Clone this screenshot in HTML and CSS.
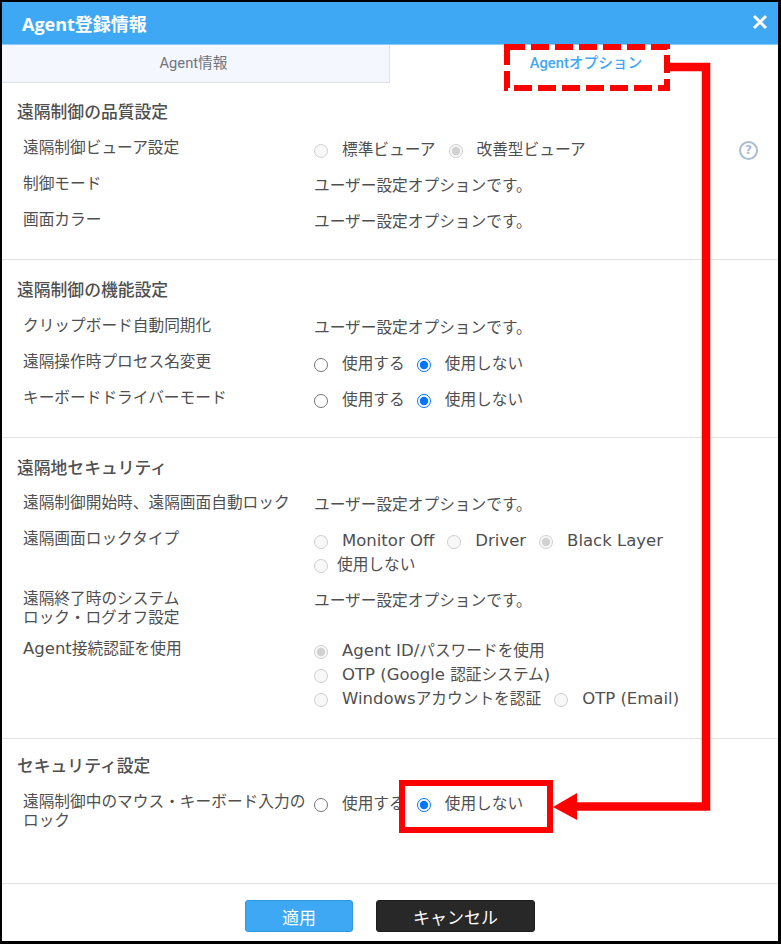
FILE: index.html
```html
<!DOCTYPE html>
<html lang="ja">
<head>
  <meta charset="UTF-8" />
  <title>Agent登録情報</title>
  <link rel="stylesheet" href="styles.css">
</head>
<body>
  <div class="dialog">
    <div class="header">
      <div class="header-title">Agent登録情報</div>
      <svg class="close" width="16" height="16" viewBox="0 0 16 16"><path d="M2 2L14 14M14 2L2 14" stroke="#fff" stroke-width="3"/></svg>
    </div>

    <div class="tabs">
      <div class="tab">Agent情報</div>
      <div class="tab active">Agentオプション</div>
    </div>

    <div class="content">
      <!-- 品質 -->
      <div class="section first">
        <div class="section-title">遠隔制御の品質設定</div>
        <div class="row">
          <div class="label">遠隔制御ビューア設定</div>
          <div class="value wide">
            <label class="opt"><input type="radio" disabled> 標準ビューア</label>
            <label class="opt"><input type="radio" disabled checked> 改善型ビューア</label>
          </div>
          <div class="help">?</div>
        </div>
        <div class="row">
          <div class="label">制御モード</div>
          <div class="value plain">ユーザー設定オプションです。</div>
        </div>
        <div class="row">
          <div class="label">画面カラー</div>
          <div class="value plain">ユーザー設定オプションです。</div>
        </div>
      </div>

      <!-- 機能 -->
      <div class="section">
        <div class="section-title">遠隔制御の機能設定</div>
        <div class="row">
          <div class="label">クリップボード自動同期化</div>
          <div class="value plain">ユーザー設定オプションです。</div>
        </div>
        <div class="row">
          <div class="label">遠隔操作時プロセス名変更</div>
          <div class="value">
            <label class="opt"><input type="radio" class="live"> 使用する</label>
            <label class="opt"><input type="radio" class="live" checked> 使用しない</label>
          </div>
        </div>
        <div class="row">
          <div class="label">キーボードドライバーモード</div>
          <div class="value">
            <label class="opt"><input type="radio" class="live"> 使用する</label>
            <label class="opt"><input type="radio" class="live" checked> 使用しない</label>
          </div>
        </div>
      </div>

      <!-- セキュリティ -->
      <div class="section remote">
        <div class="section-title">遠隔地セキュリティ</div>
        <div class="row">
          <div class="label">遠隔制御開始時、遠隔画面自動ロック</div>
          <div class="value plain">ユーザー設定オプションです。</div>
        </div>
        <div class="row lock-type">
          <div class="label">遠隔画面ロックタイプ</div>
          <div class="value wide">
            <label class="opt"><input type="radio" disabled> <span class="en">Monitor Off</span></label>
            <label class="opt"><input type="radio" disabled> <span class="en">Driver</span></label>
            <label class="opt"><input type="radio" disabled checked> <span class="en">Black Layer</span></label>
            <label class="opt tight"><input type="radio" disabled> 使用しない</label>
          </div>
        </div>
        <div class="row">
          <div class="label two-line">遠隔終了時のシステム<br>ロック・ログオフ設定</div>
          <div class="value plain">ユーザー設定オプションです。</div>
        </div>
        <div class="row">
          <div class="label"><span class="en">Agent</span>接続認証を使用</div>
          <div class="value wide">
            <label class="opt line"><input type="radio" disabled checked> <span><span class="en">Agent ID/</span>パスワードを使用</span></label>
            <label class="opt line"><input type="radio" disabled> <span><span class="en">OTP (Google </span>認証システム<span class="en">)</span></span></label>
            <label class="opt"><input type="radio" disabled> <span><span class="en">Windows</span>アカウントを認証</span></label>
            <label class="opt"><input type="radio" disabled> <span class="en">OTP (Email)</span></label>
          </div>
        </div>
      </div>

      <div class="section last">
        <div class="section-title">セキュリティ設定</div>
        <div class="row">
          <div class="label">遠隔制御中のマウス・キーボード入力の<br>ロック</div>
          <div class="value">
            <label class="opt"><input type="radio" class="live"> 使用する</label>
            <label class="opt"><input type="radio" class="live" checked> 使用しない</label>
          </div>
        </div>
      </div>
    </div>

    <div class="footer">
      <button class="btn btn-apply">適用</button>
      <button class="btn btn-cancel">キャンセル</button>
    </div>
  </div>

  <!-- annotation drawn over the screenshot -->
  <svg class="markup" width="781" height="944" viewBox="0 0 781 944">
    <rect x="507" y="47" width="160" height="41" fill="none" stroke="#f00" stroke-width="6" stroke-dasharray="18 6"/>
    <path d="M670 67H706V806.500H575" fill="none" stroke="#f00" stroke-width="8.500"/>
    <path d="M553 807L577 793V820Z" fill="#f00"/>
    <rect x="402" y="783" width="148" height="47" fill="none" stroke="#f00" stroke-width="6"/>
  </svg>
</body>
</html>
```

FILE: styles.css
```css
body {
  margin: 0;
  font-family: "DejaVu Sans", "Noto Sans CJK JP", sans-serif;
  font-size: 15.7px;
  color: #4f4f4f;
  background: white;
}
.dialog {
  box-sizing: border-box;
  width: 781px;
  height: 944px;
  border: solid black;
  border-width: 2px 3px 3px 2px;
  display: flex;
  flex-direction: column;
  overflow: hidden;
}
.header {
  box-sizing: border-box;
  height: 43px;
  flex: none;
  background: #3ea8f5;
  border-bottom: 1px solid #8ccbf8;
  display: flex;
  align-items: center;
  justify-content: space-between;
  padding: 0 10px 0 20px;
}
.header-title {
  font-family: "Open Sans", "Noto Sans CJK JP", sans-serif;
  font-size: 18px;
  font-weight: bold;
  color: white;
}
.close {
  margin-bottom: 3px;
}
.tabs {
  display: flex;
  height: 38px;
  flex: none;
  font-family: "Roboto", "Noto Sans CJK JP", sans-serif;
  font-size: 14.7px;
}
.tab {
  box-sizing: border-box;
  width: 388px;
  padding-right: 4px;
  background: #f4f7fd;
  border-right: 1px solid #dde1ea;
  border-bottom: 1px solid #dde1ea;
  color: #6f7480;
  text-align: center;
  line-height: 37px;
}
.tab.active {
  flex: 1;
  width: auto;
  padding: 0 0 0 4px;
  background: white;
  border: none;
  color: #3ea8f5;
  font-weight: 500;
}
.content {
  flex: 1;
}
.section {
  padding: 18px 0 22px;
  border-bottom: 1px solid #e2e2e6;
}
.section.first {
  padding-top: 17px;
}
.section.remote {
  padding-bottom: 24px;
}
.section.remote .section-title {
  margin-bottom: 4px;
}
.section.last {
  padding-top: 15px;
  border-bottom: none;
}
.section-title {
  margin-left: 15px;
  line-height: 24px;
  font-size: 16.8px;
  font-weight: 500;
  margin-bottom: 5px;
}
.row {
  display: flex;
  padding: 6px 0 4px;
  min-height: 26px;
}
.label {
  width: 291px;
  margin-left: 21px;
  margin-top: 3px;
  line-height: 19px;
  flex: none;
}
.label.two-line {
  margin-bottom: -1px;
}
.value {
  flex: 1;
  margin: 3px 0 -1px;
  line-height: 24px;
  display: flex;
  flex-wrap: wrap;
  column-gap: 12px;
  align-content: flex-start;
}
.value.wide {
  column-gap: 13px;
}
.value.plain {
  display: block;
}
.lock-type .value {
  max-width: 370px;
}
.opt {
  display: flex;
  align-items: center;
  white-space: nowrap;
}
.opt.line {
  width: 100%;
}
.opt input {
  width: 14px;
  height: 14px;
  margin: 1px 14px 0 0;
  flex: none;
}
.opt.tight input {
  margin-right: 9px;
}
.en {
  font-size: 16.5px;
}
.help {
  box-sizing: border-box;
  width: 19px;
  height: 19px;
  margin: 6px 20px 0 0;
  border: 2px solid #a9bdd0;
  border-radius: 50%;
  color: #a9bdd0;
  font-size: 12px;
  font-weight: bold;
  line-height: 15px;
  text-align: center;
}
.footer {
  flex: none;
  height: 58px;
  border-top: 1px solid #e2e2e6;
  display: flex;
  justify-content: flex-start;
  gap: 23px;
  padding: 16px 0 0 243px;
  box-sizing: border-box;
}
.btn {
  height: 32px;
  border-radius: 3px;
  font-family: "Noto Sans CJK JP", sans-serif;
  font-size: 17px;
  color: white;
  padding: 0;
}
.btn-apply {
  width: 108px;
  background: #3ea8f5;
  border: 1px solid #2f96e2;
}
.btn-cancel {
  width: 159px;
  background: #282828;
  border: 1px solid #1c1c1c;
}
.markup {
  position: absolute;
  top: 0;
  left: 0;
  pointer-events: none;
}
```
